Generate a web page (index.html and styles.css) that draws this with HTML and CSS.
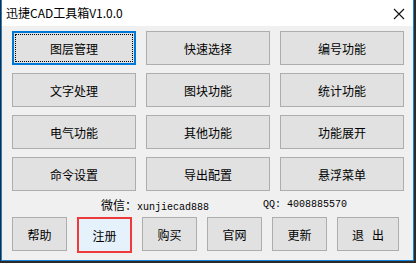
FILE: index.html
```html
<!DOCTYPE html>
<html lang="zh-CN">
<head>
    <meta charset="UTF-8">
    <title>迅捷CAD工具箱V1.0.0</title>
    <link rel="stylesheet" href="styles.css">
</head>
<body>
    <div class="window">
        <div class="title-bar">
            <span class="title">迅捷CAD工具箱V1.0.0</span>
            <svg class="close" width="12" height="12" viewBox="0 0 12 12">
                <path d="M1 1 L11 11 M11 1 L1 11" stroke="#111" stroke-width="1.1" fill="none"/>
            </svg>
        </div>
        <div class="client">
            <div class="tool-grid">
                <button class="btn focused"><span class="focus-ring">图层管理</span></button>
                <button class="btn">快速选择</button>
                <button class="btn">编号功能</button>
                <button class="btn">文字处理</button>
                <button class="btn">图块功能</button>
                <button class="btn">统计功能</button>
                <button class="btn">电气功能</button>
                <button class="btn">其他功能</button>
                <button class="btn">功能展开</button>
                <button class="btn">命令设置</button>
                <button class="btn">导出配置</button>
                <button class="btn">悬浮菜单</button>
            </div>
            <div class="contact">
                <span class="wechat"><span class="cjk">微信：</span>xunjiecad888</span>
                <span class="qq">QQ: 4008885570</span>
            </div>
            <div class="bottom-bar">
                <button class="btn small">帮助</button>
                <button class="btn small marked">注册</button>
                <button class="btn small">购买</button>
                <button class="btn small">官网</button>
                <button class="btn small">更新</button>
                <button class="btn small wide">退&nbsp;&nbsp;&nbsp;出</button>
            </div>
        </div>
    </div>
</body>
</html>
```

FILE: styles.css
```css
* {
    margin: 0;
    padding: 0;
    box-sizing: border-box;
}

body {
    width: 416px;
    height: 263px;
    background-color: #2a2a2a;
    font-family: "Noto Sans CJK SC", "Noto Sans", sans-serif;
    font-size: 12px;
    color: #000;
    overflow: hidden;
}

.window {
    margin-left: 1px;
    width: 413px;
    height: 261px;
    border: 1px solid #1883d7;
    border-top: none;
    display: flex;
    flex-direction: column;
}

.title-bar {
    height: 26px;
    background-color: #fff;
    display: flex;
    align-items: center;
    justify-content: space-between;
    padding-left: 4px;
    padding-right: 8px;
}

.title {
    font-size: 12px;
    line-height: 14px;
}

.close {
    margin-top: 1px;
}

.client {
    flex: 1;
    background-color: #f0f0f0;
    padding: 5px 0 0 10px;
}

.tool-grid {
    display: grid;
    grid-template-columns: repeat(3, 124px);
    grid-auto-rows: 34px;
    column-gap: 10px;
    row-gap: 8px;
}

.btn {
    background-color: #e1e1e1;
    border: 1px solid #adadad;
    font-family: "Noto Sans CJK SC", "Noto Sans", sans-serif;
    font-size: 12px;
    color: #000;
    display: flex;
    align-items: center;
    justify-content: center;
}

.btn.focused {
    border: 2px solid #0078d7;
    padding: 1px;
}

.focus-ring {
    width: 100%;
    height: 100%;
    border: 1px dotted #000;
    display: flex;
    align-items: center;
    justify-content: center;
}

.contact {
    height: 26px;
    display: flex;
    align-items: center;
    font-family: "Liberation Mono", monospace;
    font-size: 10px;
    padding-top: 1px;
}

.wechat {
    margin-left: 89px;
}

.cjk {
    font-family: "Noto Sans CJK SC", sans-serif;
    font-size: 12px;
}

.qq {
    margin-left: 54px;
}

.bottom-bar {
    display: flex;
    gap: 10px;
}

.btn.small {
    width: 55px;
    height: 34px;
}

.btn.wide {
    width: 62px;
}

.btn.marked {
    background-color: #e5f1fb;
    border: 2px solid #ee3a3a;
    height: 36px;
    margin-left: 0;
}
```
